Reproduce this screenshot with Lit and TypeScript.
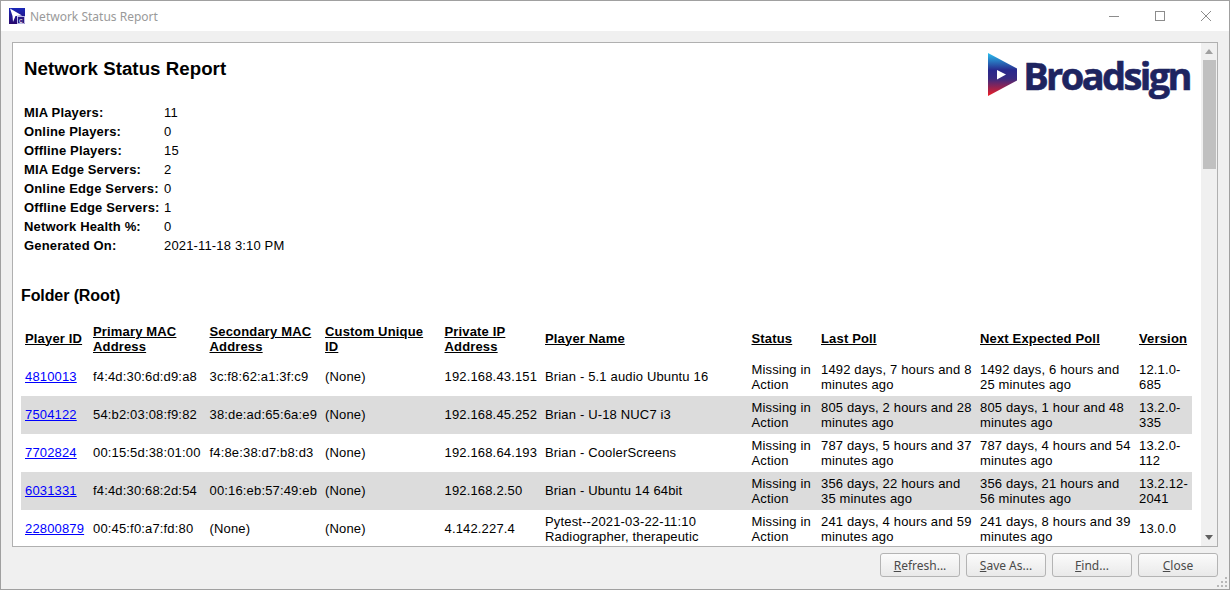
import { LitElement, html, css } from "lit";
import { customElement } from "lit/decorators.js";

const summary: [string, string][] = [
  ["MIA Players:", "11"],
  ["Online Players:", "0"],
  ["Offline Players:", "15"],
  ["MIA Edge Servers:", "2"],
  ["Online Edge Servers:", "0"],
  ["Offline Edge Servers:", "1"],
  ["Network Health %:", "0"],
  ["Generated On:", "2021-11-18 3:10 PM"],
];
const heads: [string, boolean][] = [["Player ID", true], ["Primary MAC Address", false], ["Secondary MAC Address", false], ["Custom Unique ID", false], ["Private IP Address", false], ["Player Name", true], ["Status", true], ["Last Poll", true], ["Next Expected Poll", true], ["Version", true]];
const widths = [68, 116.5, 115.5, 119.5, 100.5, 206.5, 69.5, 159, 159, 57];
const rows = [
  ["4810013", "f4:4d:30:6d:d9:a8", "3c:f8:62:a1:3f:c9", "(None)", "192.168.43.151", "Brian - 5.1 audio Ubuntu 16", "Missing in Action", "1492 days, 7 hours and 8 minutes ago", "1492 days, 6 hours and 25 minutes ago", "12.1.0-685"],
  ["7504122", "54:b2:03:08:f9:82", "38:de:ad:65:6a:e9", "(None)", "192.168.45.252", "Brian - U-18 NUC7 i3", "Missing in Action", "805 days, 2 hours and 28 minutes ago", "805 days, 1 hour and 48 minutes ago", "13.2.0-335"],
  ["7702824", "00:15:5d:38:01:00", "f4:8e:38:d7:b8:d3", "(None)", "192.168.64.193", "Brian - CoolerScreens", "Missing in Action", "787 days, 5 hours and 37 minutes ago", "787 days, 4 hours and 54 minutes ago", "13.2.0-112"],
  ["6031331", "f4:4d:30:68:2d:54", "00:16:eb:57:49:eb", "(None)", "192.168.2.50", "Brian - Ubuntu 14 64bit", "Missing in Action", "356 days, 22 hours and 35 minutes ago", "356 days, 21 hours and 56 minutes ago", "13.2.12-2041"],
  ["22800879", "00:45:f0:a7:fd:80", "(None)", "(None)", "4.142.227.4", "Pytest--2021-03-22-11:10 Radiographer, therapeutic", "Missing in Action", "241 days, 4 hours and 59 minutes ago", "241 days, 8 hours and 39 minutes ago", "13.0.0"],
];
const buttons: [string, string][] = [["R", "efresh..."], ["S", "ave As..."], ["F", "ind..."], ["C", "lose"]];

@customElement("app-root")
export class AppRoot extends LitElement {
  static styles = css`
    :host { display: block; width: 1230px; height: 590px; overflow: hidden; }
    .window { box-sizing: border-box; width: 1230px; height: 590px; border: 1px solid #a0a0a0; background: #f0f0f0; display: flex; flex-direction: column; position: relative; }
    .titlebar { height: 30px; flex: none; background: #fff; display: flex; align-items: center; padding-left: 8px; }
    .app-icon { width: 16px; height: 16px; margin-right: 5px; flex: none; }
    .title { font: 12px "Noto Sans", sans-serif; color: #9a9a9a; flex: 1; }
    .ctrl { width: 46px; height: 30px; display: flex; align-items: center; justify-content: center; }
    .ctrl svg { width: 12px; height: 12px; }
    .frame { margin: 11px 11px 0 11px; height: 505px; flex: none; box-sizing: border-box; border: 1px solid #b0b0b0; background: #fff; display: flex; overflow: hidden; }
    .doc { flex: 1; min-width: 0; overflow: hidden; font: 13px "Liberation Sans", Arial, sans-serif; color: #000; letter-spacing: 0.16px; padding-left: 8px; box-sizing: border-box; }
    .head { display: flex; justify-content: space-between; align-items: flex-start; padding: 11px 0 0 3px; height: 46px; }
    h1 { font-size: 18.67px; font-weight: bold; margin: 4px 0 0 0; line-height: 22px; letter-spacing: 0.05px; }
    .logo { display: flex; align-items: center; margin-right: 3px; margin-top: -1px; gap: 6px; height: 43px; }
    .logo svg { width: 29px; height: 43px; flex: none; }
    .logo span { font: bold 38px/44px "Open Sans", sans-serif; color: #1e2460; letter-spacing: -2.6px; -webkit-text-stroke: 0.6px #1e2460; }
    .summary { display: grid; grid-template-columns: 140px auto; justify-content: start; grid-auto-rows: 19px; padding: 0 0 0 3px; margin-top: 3px; align-items: center; }
    .summary b { font-weight: bold; }
    h2 { font-size: 16px; font-weight: bold; margin: 31px 0 0 0; line-height: 20px; letter-spacing: -0.1px; }
    table { border-collapse: collapse; table-layout: fixed; width: 1171px; margin-top: 18px; }
    th { font-weight: bold; text-align: left; text-decoration: underline; vertical-align: middle; padding: 0 2px 4px 4px; line-height: 15px; height: 30px; }
    th.one { padding-bottom: 6px; height: 28px; }
    td { height: 38px; padding: 0 2px 1px 4px; line-height: 15px; vertical-align: middle; box-sizing: border-box; }
    tr.alt td { background: #dcdcdc; }
    a { color: #0000ff; text-decoration: underline; }
    .scroll { width: 16px; flex: none; margin-left: 8px; background: #f0f0f0; display: flex; flex-direction: column; align-items: center; }
    .arrow { height: 17px; flex: none; display: flex; align-items: center; justify-content: center; }
    .arrow svg { width: 8px; height: 5px; }
    .thumb { width: 13px; height: 109px; background: #c0c0c0; flex: none; }
    .fill { flex: 1; }
    .footer { display: flex; justify-content: flex-end; gap: 6px; margin: 6px 11px 0 0; }
    button { width: 80px; height: 24px; box-sizing: border-box; border: 1px solid #b4b4b4; border-radius: 3px; background: linear-gradient(#fbfbfb, #e9e9e9); font: 12px "Noto Sans", sans-serif; color: #4a4a4a; padding: 0; }
    button u { text-decoration: underline; }
    .grip { position: absolute; right: 1px; bottom: 1px; width: 12px; height: 12px; }
  `;

  render() {
    return html`
      <div class="window">
        <div class="titlebar">
          <svg class="app-icon" viewBox="0 0 16 16">
            <defs>
              <linearGradient id="ig" x1="0" y1="0" x2="0" y2="1">
                <stop offset="0" stop-color="#1a28b8" />
                <stop offset="1" stop-color="#28086c" />
              </linearGradient>
            </defs>
            <rect width="16" height="16" fill="url(#ig)" />
            <path d="M1 0.5 L13 7.5 L6.5 8 L4 14 L3.5 8 Z" fill="#fff" />
            <rect x="8.5" y="8.5" width="7" height="7" fill="#2a1a80" stroke="#dfe0ff" stroke-width="0.8" />
            <text x="10" y="14.5" font-size="7" font-family="Liberation Sans" fill="#fff">c</text>
          </svg>
          <div class="title">Network Status Report</div>
          <div class="ctrl"><svg viewBox="0 0 12 12"><path d="M1 6.5H11" stroke="#8c8c8c" fill="none" /></svg></div>
          <div class="ctrl"><svg viewBox="0 0 12 12"><rect x="1.5" y="1.5" width="9" height="9" stroke="#8c8c8c" fill="none" /></svg></div>
          <div class="ctrl"><svg viewBox="0 0 12 12"><path d="M1 1L11 11M11 1L1 11" stroke="#8c8c8c" fill="none" /></svg></div>
        </div>
        <div class="frame">
          <div class="doc">
            <div class="head">
              <h1>Network Status Report</h1>
              <div class="logo">
                <svg viewBox="0 0 29 43">
                  <defs>
                    <linearGradient id="lg" x1="0" y1="0" x2="0" y2="1">
                      <stop offset="0" stop-color="#29c0f0" />
                      <stop offset="0.4" stop-color="#28288c" />
                      <stop offset="0.6" stop-color="#3a2a80" />
                      <stop offset="1" stop-color="#f01c24" />
                    </linearGradient>
                  </defs>
                  <path d="M0 0 L29 15.5 V27.5 L0 43 Z" fill="url(#lg)" />
                  <path d="M9 17 L18 21.5 L9 26.5 Z" fill="#fff" />
                </svg>
                <span>Broadsign</span>
              </div>
            </div>
            <div class="summary">
              ${summary.map(([k, v]) => html`<b>${k}</b><span>${v}</span>`)}
            </div>
            <h2>Folder (Root)</h2>
            <table>
              <colgroup>${widths.map((w) => html`<col style="width:${w}px" />`)}</colgroup>
              <thead><tr>${heads.map(([h, one]) => html`<th class=${one ? "one" : ""}>${h}</th>`)}</tr></thead>
              <tbody>
                ${rows.map((r, i) => html`<tr class=${i % 2 ? "alt" : ""}>
                  ${r.map((c, j) => html`<td>${j === 0 ? html`<a>${c}</a>` : c}</td>`)}
                </tr>`)}
              </tbody>
            </table>
          </div>
          <div class="scroll">
            <div class="arrow"><svg viewBox="0 0 8 5"><path d="M4 0L8 5H0Z" fill="#a0a0a0" /></svg></div>
            <div class="thumb"></div>
            <div class="fill"></div>
            <div class="arrow"><svg viewBox="0 0 8 5"><path d="M0 0H8L4 5Z" fill="#606060" /></svg></div>
          </div>
        </div>
        <div class="footer">
          ${buttons.map(([k, r]) => html`<button><u>${k}</u>${r}</button>`)}
        </div>
        <svg class="grip" viewBox="0 0 12 12" fill="#b8b8b8">
          <rect x="9" y="1" width="2" height="2" /><rect x="5" y="5" width="2" height="2" /><rect x="9" y="5" width="2" height="2" />
          <rect x="1" y="9" width="2" height="2" /><rect x="5" y="9" width="2" height="2" /><rect x="9" y="9" width="2" height="2" />
        </svg>
      </div>
    `;
  }
}
